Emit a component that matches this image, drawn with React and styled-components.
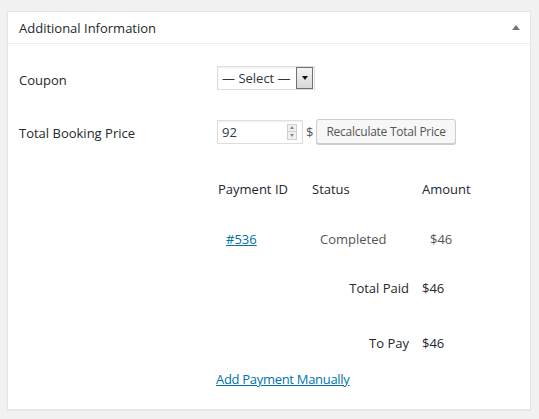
import React from 'react';
import styled, { createGlobalStyle } from 'styled-components';

const GlobalStyle = createGlobalStyle`
  html, body {
    margin: 0;
    padding: 0;
    background: #f1f1f1;
    font-family: "Open Sans", "Noto Sans", sans-serif;
    color: #23282d;
  }
`;

const Page = styled.div`
  padding: 11px 8px 9px 7px;
  width: 539px;
  height: 419px;
  box-sizing: border-box;
`;

const Panel = styled.div`
  background: #fff;
  border: 1px solid #e5e5e5;
  box-shadow: 0 1px 1px rgba(0, 0, 0, 0.04);
  height: 100%;
  box-sizing: border-box;
`;

const PanelHeader = styled.div`
  display: flex;
  align-items: center;
  justify-content: space-between;
  height: 31px;
  padding: 0 10px 0 11px;
  border-bottom: 1px solid #eee;
`;

const PanelTitle = styled.h2`
  margin: 0;
  font-size: 13px;
  font-weight: 400;
  color: #23282d;
`;

const Toggle = styled.span`
  width: 0;
  height: 0;
  border-left: 4px solid transparent;
  border-right: 4px solid transparent;
  border-bottom: 5px solid #72777c;
`;

const PanelBody = styled.div`
  padding: 22px 0 0 11px;
`;

const FormGrid = styled.div`
  display: grid;
  grid-template-columns: 198px 1fr;
  row-gap: 29px;
  align-items: center;
`;

const Label = styled.label`
  font-size: 13px;
  color: #23282d;
  padding-top: ${(p) => p.$nudge || 0}px;
`;

const Controls = styled.div`
  display: flex;
  align-items: center;
  gap: 2px;
`;

const SelectBox = styled.div`
  display: flex;
  align-items: center;
  justify-content: space-between;
  width: 98px;
  height: 24px;
  box-sizing: border-box;
  border: 1px solid #ddd;
  box-shadow: inset 0 1px 2px rgba(0, 0, 0, 0.07);
  padding: 0 1px 0 4px;
  font-size: 13px;
  color: #32373c;
`;

const SelectArrow = styled.span`
  display: flex;
  align-items: center;
  justify-content: center;
  width: 17px;
  height: 22px;
  box-sizing: border-box;
  border: 1px solid #707070;
  background: linear-gradient(#f4f4f4, #d8d8d8);

  &::after {
    content: '';
    border-left: 3.5px solid transparent;
    border-right: 3.5px solid transparent;
    border-top: 4px solid #111;
  }
`;

const NumberBox = styled.div`
  display: flex;
  align-items: center;
  justify-content: space-between;
  width: 86px;
  height: 24px;
  box-sizing: border-box;
  border: 1px solid #ddd;
  box-shadow: inset 0 1px 2px rgba(0, 0, 0, 0.07);
  padding: 0 5px 0 4px;
  font-size: 13px;
  color: #32373c;
`;

const Spinner = styled.span`
  display: flex;
  flex-direction: column;
  width: 10px;
  height: 16px;
  border: 1px solid #cfcfcf;
  box-sizing: border-box;
`;

const SpinHalf = styled.span`
  flex: 1;
  display: flex;
  align-items: center;
  justify-content: center;
  background: #f0f0f0;
  & + & {
    border-top: 1px solid #cfcfcf;
  }

  &::after {
    content: '';
    border-left: 2.5px solid transparent;
    border-right: 2.5px solid transparent;
    ${(p) =>
      p.$down ? 'border-top: 3px solid #888;' : 'border-bottom: 3px solid #888;'}
  }
`;

const Currency = styled.span`
  font-size: 13px;
  color: #555;
  margin: 0 1px;
`;

const Button = styled.button`
  height: 25px;
  padding: 0 9px;
  font-family: inherit;
  font-size: 12px;
  letter-spacing: -0.25px;
  color: #555;
  background: #f7f7f7;
  border: 1px solid #ccc;
  border-radius: 3px;
  box-shadow: 0 1px 0 #ccc;
  cursor: pointer;
`;

const Payments = styled.div`
  margin: 20px 0 0 199px;
`;

const PaymentTable = styled.table`
  border-collapse: collapse;
  font-size: 13px;
`;

const Row = styled.tr`
  height: ${(p) => p.$h}px;
`;

const HeadCell = styled.th`
  width: ${(p) => p.$w}px;
  padding: 0;
  text-align: left;
  font-weight: 400;
  color: #23282d;
`;

const Cell = styled.td`
  padding: 0 0 0 8px;
  color: #555;
`;

const TotalLabel = styled.th`
  padding: ${(p) => p.$top || 0}px 13px 0 0;
  text-align: right;
  font-weight: 400;
  color: #23282d;
`;

const TotalValue = styled.td`
  padding: ${(p) => p.$top || 0}px 0 0 0;
  color: #23282d;
`;

const Link = styled.a`
  color: #0073aa;
  text-decoration: underline;
  font-size: 13px;
`;

const ManualLink = styled(Link)`
  display: inline-block;
  margin: 3px 0 0 -2px;
  line-height: 20px;
  letter-spacing: -0.3px;
`;

const App = () => {
  return (
    <Page>
      <GlobalStyle />
      <Panel>
        <PanelHeader>
          <PanelTitle>Additional Information</PanelTitle>
          <Toggle />
        </PanelHeader>
        <PanelBody>
          <FormGrid>
            <Label $nudge={4}>Coupon</Label>
            <Controls>
              <SelectBox>
                — Select —
                <SelectArrow />
              </SelectBox>
            </Controls>
            <Label $nudge={3}>Total Booking Price</Label>
            <Controls>
              <NumberBox>
                92
                <Spinner>
                  <SpinHalf />
                  <SpinHalf $down />
                </Spinner>
              </NumberBox>
              <Currency>$</Currency>
              <Button>Recalculate Total Price</Button>
            </Controls>
          </FormGrid>
          <Payments>
            <PaymentTable>
              <tbody>
                <Row $h={50}>
                  <HeadCell $w={94}>Payment ID</HeadCell>
                  <HeadCell $w={110}>Status</HeadCell>
                  <HeadCell $w={70}>Amount</HeadCell>
                </Row>
                <Row $h={50}>
                  <Cell>
                    <Link href="#">#536</Link>
                  </Cell>
                  <Cell>Completed</Cell>
                  <Cell>$46</Cell>
                </Row>
                <Row $h={48}>
                  <TotalLabel colSpan={2}>Total Paid</TotalLabel>
                  <TotalValue>$46</TotalValue>
                </Row>
                <Row $h={54}>
                  <TotalLabel colSpan={2} $top={8}>To Pay</TotalLabel>
                  <TotalValue $top={8}>$46</TotalValue>
                </Row>
              </tbody>
            </PaymentTable>
            <ManualLink href="#">Add Payment Manually</ManualLink>
          </Payments>
        </PanelBody>
      </Panel>
    </Page>
  );
};

export default App;
